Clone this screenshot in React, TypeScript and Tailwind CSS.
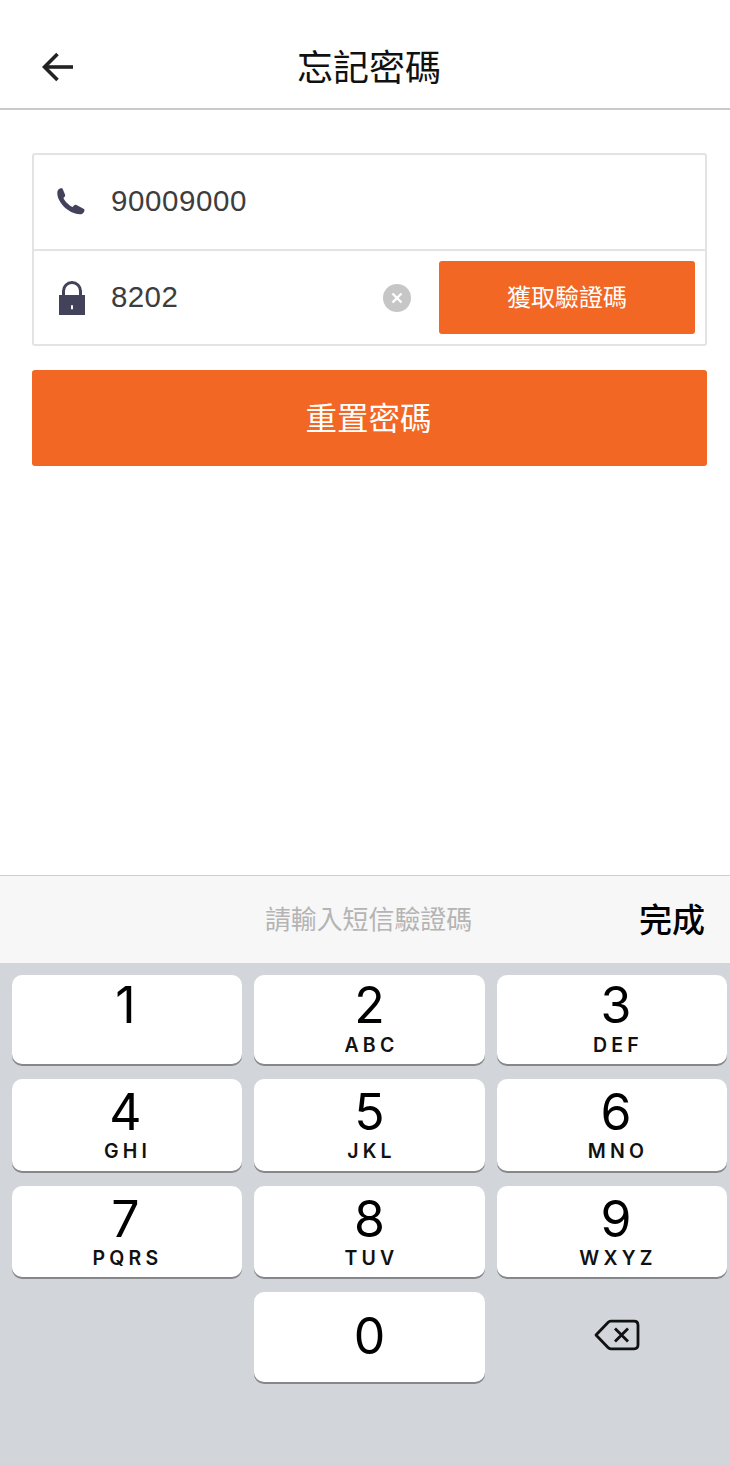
const cjk = "font-['Noto_Sans_CJK_TC','Noto_Sans_CJK_SC',sans-serif]";
const keys: [string, string][] = [
  ['1', ''], ['2', 'ABC'], ['3', 'DEF'],
  ['4', 'GHI'], ['5', 'JKL'], ['6', 'MNO'],
  ['7', 'PQRS'], ['8', 'TUV'], ['9', 'WXYZ'],
];
const colPad = ['pr-[3px]', '', 'pl-[8px]'];

function Key({ d, l, i }: { d: string; l: string; i: number }) {
  const first = i < 3;
  return (
    <div className={`flex flex-col items-center rounded-[10px] bg-white shadow-[0_2px_0_#85878b] ${colPad[i % 3]}`}>
      <div className={`h-[54px] text-[50px] leading-[54px] text-black font-['Inter',sans-serif] font-normal ${first ? 'mt-[3px]' : 'mt-[6px]'}`}>{d}</div>
      <div className={`h-[20px] text-[19.500px] leading-[20px] font-semibold tracking-[4.200px] pl-[4px] text-[#111] font-['Inter',sans-serif] ${first ? 'mt-[3px]' : 'mt-[2px]'}`}>{l}</div>
    </div>
  );
}

export default function App() {
  return (
    <div className="flex h-[1465px] w-[730px] flex-col overflow-hidden bg-white">
      <header className="relative flex h-[110px] shrink-0 items-center justify-center border-b-2 border-[#c9c9c9] pt-[24px]">
        <svg className="absolute left-[42px] top-[52px]" width="32" height="30" viewBox="0 0 32 30" fill="none" stroke="#222" strokeWidth="3.6">
          <path d="M31 15H3" />
          <path d="M15.500 2 2.500 15l13 13" />
        </svg>
        <h1 className={`text-[36px] font-normal leading-[44px] text-[#111] ${cjk} ml-[8px] -mt-[3px]`}>忘記密碼</h1>
      </header>

      <main className="flex flex-1 flex-col pl-[32px] pt-[43px]">
        <div className="flex h-[193px] w-[675px] flex-col rounded-[3px] border-2 border-[#e3e3e3]">
          <div className="flex h-[96px] items-center border-b-2 border-[#e3e3e3] pb-[2px] pl-[22px]">
            <svg width="30" height="30" viewBox="0 0 30 30" className="shrink-0">
              <path fill="#42425a" d="M2.500 3.500C3.500 2.500 5.500 2 6.500 2.500L9 8.500c.4 1 0 2-.6 2.600l-1 .9C8.800 15 12.500 19 16.500 21l1.500-1.600c.8-.7 1.600-.7 2.500-.3l7 3.600c1.200.7 1.200 1.600.7 2.700-.8 1.700-2.200 3-4.400 2.900C12 27.500 1 16 1.300 6.500c0-1.200.5-2.200 1.200-3Z" />
            </svg>
            <span className="ml-[25px] text-[29.500px] leading-none tracking-[0.600px] text-[#3d3d3d] font-['Liberation_Sans',sans-serif]">90009000</span>
          </div>
          <div className="flex flex-1 items-center pl-[24px] pr-[10px]">
            <svg width="28" height="34" viewBox="0 0 28 34" className="shrink-0">
              <path fill="none" stroke="#42425a" strokeWidth="3" d="M5.500 15V10a8.500 8.500 0 0 1 17 0v5" />
              <rect x="1" y="14" width="26" height="20" fill="#42425a" />
              <rect x="13" y="24" width="2" height="4.500" rx="1" fill="#fff" />
            </svg>
            <span className="ml-[25px] -mt-[2px] flex-1 text-[29.500px] leading-none tracking-[0.400px] text-[#3d3d3d] font-['Liberation_Sans',sans-serif]">8202</span>
            <div className="mr-[28px] flex h-[28px] w-[28px] items-center justify-center rounded-full bg-[#c6c6c6]">
              <svg width="14" height="14" viewBox="0 0 14 14" stroke="#fff" strokeWidth="2.400"><path d="M2.500 2.500l9 9M11.500 2.500l-9 9" /></svg>
            </div>
            <button className={`flex h-[73px] w-[256px] items-center justify-center rounded-[3px] bg-[#f26724] pb-[4px] text-[24px] text-white ${cjk}`}>獲取驗證碼</button>
          </div>
        </div>
        <button className={`mt-[24px] flex h-[96px] w-[675px] items-center justify-center rounded-[3px] bg-[#f26724] pb-[3px] pr-[2px] text-[31.500px] text-white ${cjk}`}>重置密碼</button>
      </main>

      <div className="relative flex h-[88px] shrink-0 items-center justify-center border-t border-[#cfcfcf] bg-[#f7f7f7]">
        <span className={`ml-[7px] pb-[2px] text-[25.900px] text-[#b4b4b4] ${cjk}`}>請輸入短信驗證碼</span>
        <span className={`absolute right-[25px] top-[20px] text-[33px] leading-[44px] font-medium text-black ${cjk}`}>完成</span>
      </div>

      <div className="h-[502px] shrink-0 bg-[#d2d5d9] pl-[12px] pr-[3px] pt-[12px]">
        <div className="grid grid-cols-[230px_231px_230px] grid-rows-[89px_92px_91px_90px] gap-x-[12px] gap-y-[15px]">
          {keys.map(([d, l], i) => <Key key={d} d={d} l={l} i={i} />)}
          <div />
          <div className="flex items-center justify-center rounded-[10px] bg-white pb-[2px] shadow-[0_2px_0_#85878b]">
            <span className="text-[50px] leading-[54px] text-black font-['Inter',sans-serif]">0</span>
          </div>
          <div className="flex items-center justify-center pb-[4px] pl-[10px]">
            <svg width="46" height="34" viewBox="0 0 46 34" fill="none" stroke="#111" strokeWidth="2.800" strokeLinejoin="round">
              <path d="M2 17 14 4.500c.8-.9 1.700-1.300 2.800-1.300H40c2.400 0 4 1.600 4 4v19.600c0 2.400-1.600 4-4 4H16.800c-1.100 0-2-.4-2.800-1.300Z" />
              <path d="M21 10.500l13 13M34 10.500l-13 13" />
            </svg>
          </div>
        </div>
      </div>
    </div>
  );
}
